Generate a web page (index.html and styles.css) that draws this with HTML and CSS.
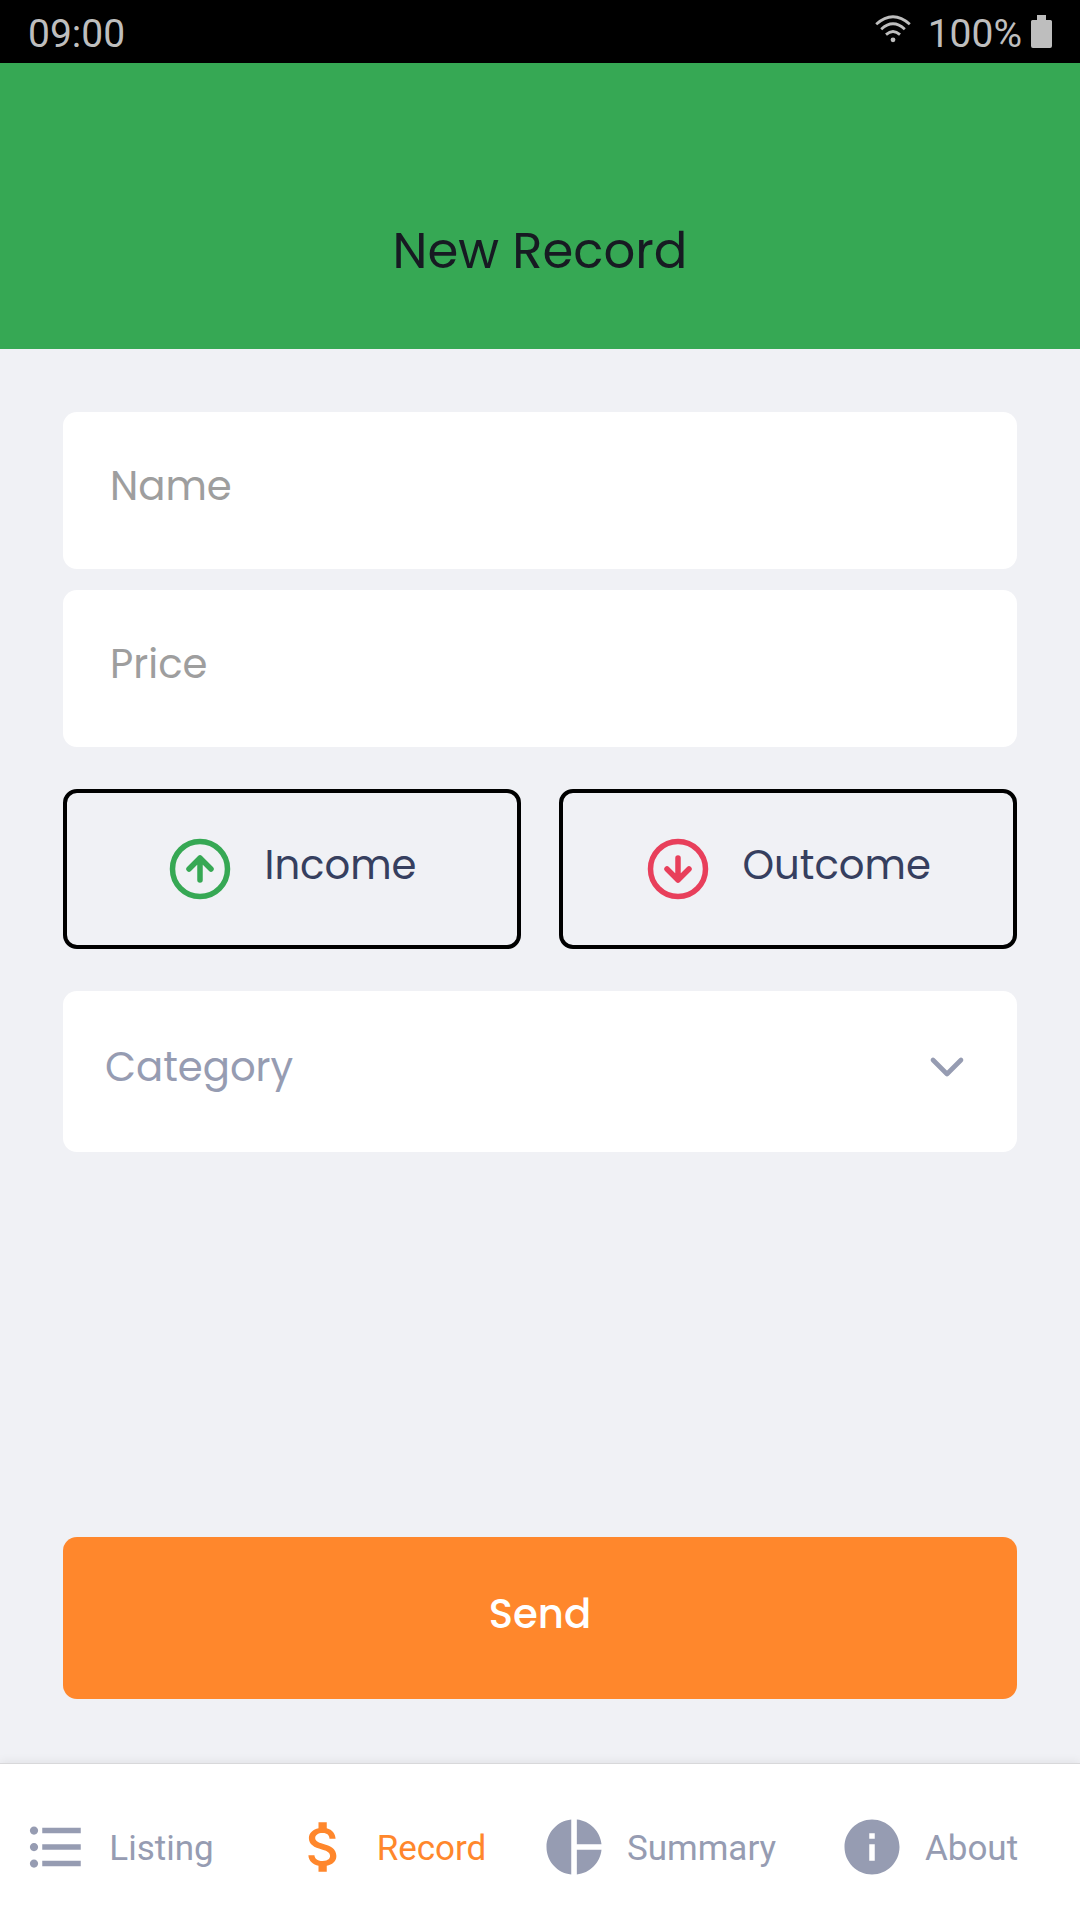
FILE: index.html
```html
<!DOCTYPE html>
<html lang="en">
<head>
<meta charset="utf-8">
<title>New Record</title>
<link rel="stylesheet" href="styles.css">
</head>
<body>
<div class="screen">
  <div class="status">
    <span class="status-time">09:00</span>
    <div class="status-right">
      <svg class="wifi" viewBox="0 0 36 28" fill="none" stroke="currentColor" stroke-width="2.8">
        <path d="M1.200 9.200Q18-5.800 34.800 9.200M6.200 14.200Q18 3.300 29.800 14.200M11 19.600Q18 13.400 25 19.600"/>
        <circle cx="18" cy="24.800" r="2.400" fill="currentColor" stroke="none"/>
      </svg>
      <span class="status-level">100%</span>
      <svg class="battery" viewBox="0 0 21 33" fill="currentColor"><path d="M6 0h9v5h4.500Q21 5 21 6.500V31Q21 33 19 33H2Q0 33 0 31V6.500Q0 5 1.500 5H6z"/></svg>
    </div>
  </div>
  <header class="header"><h1 class="title">New Record</h1></header>
  <main class="form">
    <div class="fields">
      <input class="field field-name" type="text" placeholder="Name">
      <input class="field field-price" type="text" placeholder="Price">
    </div>
    <div class="types">
      <button class="type" type="button">
        <svg class="type-icon up" viewBox="0 0 24 24"><circle cx="12" cy="12" r="10"/><path d="M16 12l-4-4-4 4M12 16V8"/></svg>
        <span class="type-label income">Income</span>
      </button>
      <button class="type" type="button">
        <svg class="type-icon down" viewBox="0 0 24 24"><circle cx="12" cy="12" r="10"/><path d="M8 12l4 4 4-4M12 8v8"/></svg>
        <span class="type-label outcome">Outcome</span>
      </button>
    </div>
    <button class="category" type="button">
      <span class="category-label">Category</span>
      <svg class="chevron" viewBox="0 0 24 24"><path d="M6 9l6 6 6-6"/></svg>
    </button>
    <button class="send" type="button"><span class="send-label">Send</span></button>
  </main>
  <nav class="tabs">
    <a class="tab">
      <svg class="tab-icon" viewBox="0 0 24 24"><path d="M4 10.500c-.83 0-1.500.67-1.500 1.500s.67 1.500 1.500 1.500 1.500-.67 1.500-1.500-.67-1.500-1.500-1.500zm0-6c-.83 0-1.500.67-1.500 1.500S3.170 7.500 4 7.500 5.500 6.830 5.500 6 4.830 4.500 4 4.500zm0 12c-.83 0-1.500.68-1.500 1.500s.68 1.500 1.500 1.500 1.500-.68 1.500-1.500-.67-1.500-1.500-1.500zM7 19h14v-2H7v2zm0-6h14v-2H7v2zm0-8v2h14V5H7z"/></svg>
      <span class="tab-label">Listing</span>
    </a>
    <a class="tab active">
      <svg class="tab-icon" viewBox="0 0 24 24"><path d="M11.800 10.900c-2.270-.59-3-1.200-3-2.150 0-1.090 1.010-1.850 2.700-1.850 1.780 0 2.440.85 2.500 2.100h2.210c-.07-1.720-1.120-3.300-3.210-3.810V3h-3v2.160c-1.940.42-3.500 1.680-3.500 3.610 0 2.310 1.910 3.460 4.700 4.130 2.500.6 3 1.480 3 2.410 0 .69-.49 1.790-2.700 1.790-2.060 0-2.870-.92-2.980-2.100h-2.200c.12 2.190 1.760 3.420 3.680 3.830V21h3v-2.150c1.950-.37 3.500-1.500 3.500-3.550 0-2.840-2.430-3.810-4.700-4.400z"/></svg>
      <span class="tab-label">Record</span>
    </a>
    <a class="tab">
      <svg class="tab-icon" viewBox="0 0 24 24"><path d="M11 2v20c-5.070-.5-9-4.790-9-10s3.930-9.500 9-10zm2.030 0v8.990H22c-.47-4.740-4.240-8.520-8.970-8.990zm0 11.010V22c4.740-.47 8.500-4.250 8.970-8.990h-8.970z"/></svg>
      <span class="tab-label">Summary</span>
    </a>
    <a class="tab">
      <svg class="tab-icon" viewBox="0 0 24 24"><path d="M12 2C6.480 2 2 6.480 2 12s4.480 10 10 10 10-4.480 10-10S17.520 2 12 2zm1 15h-2v-6h2v6zm0-8h-2V7h2v2z"/></svg>
      <span class="tab-label">About</span>
    </a>
  </nav>
</div>
</body>
</html>
```
FILE: styles.css
```css
* { box-sizing: border-box; }
body { margin: 0; }
button, input { font: inherit; border: 0; margin: 0; padding: 0; background: none; }

.screen {
  width: 1080px;
  height: 1920px;
  display: flex;
  flex-direction: column;
  overflow: hidden;
  background: #f0f1f5;
  font-family: Poppins, Inter, sans-serif;
  font-size: 40.2px;
}

.status {
  height: 63px;
  flex: none;
  display: flex;
  justify-content: space-between;
  padding: 0 28px;
  background: #000;
  color: #bebebe;
  font: 39px/46px Roboto, sans-serif;
}
.status-time { padding-top: 11px; }
.status-right { display: flex; align-items: flex-start; }
.wifi { width: 36px; height: 28px; margin: 15px 17px 0 0; }
.status-level { padding-top: 11px; margin-right: 9px; }
.battery { width: 21px; height: 33px; margin-top: 15px; }

.header {
  height: 286px;
  flex: none;
  display: flex;
  align-items: flex-end;
  justify-content: center;
  padding-bottom: 68px;
  background: #36a854;
}
.title { margin: 0; color: #171a22; font-size: 49.7px; font-weight: 400; line-height: 60px; }

.form { flex: 1; display: flex; flex-direction: column; padding: 63px 63px 64px; }
.fields { display: flex; flex-direction: column; gap: 21px; }
.field {
  width: 100%;
  height: 157px;
  padding: 0 47px 10px;
  border-radius: 14px;
  background: #fff;
}
.field::placeholder { color: #9e9e9e; opacity: 1; }

.types { display: grid; grid-template-columns: 1fr 1fr; gap: 38px; margin-top: 42px; }
.type {
  height: 160px;
  display: flex;
  align-items: center;
  padding-left: 100px;
  border: 4px solid #000;
  border-radius: 14px;
  color: #363f5f;
}
.type + .type { padding-left: 82px; }
.type-icon { width: 66px; height: 66px; fill: none; stroke-width: 2; stroke-linecap: round; stroke-linejoin: round; }
.up { stroke: #36a854; }
.down { stroke: #e83f5b; }
.type-label { margin-left: 31.5px; padding-bottom: 8px; }

.category {
  height: 161px;
  display: flex;
  align-items: center;
  justify-content: space-between;
  margin-top: 42px;
  padding: 0 42px 10px;
  border-radius: 14px;
  background: #fff;
  color: #969cb2;
}
.chevron { width: 56px; height: 56px; fill: none; stroke: #969cb2; stroke-width: 2; stroke-linecap: round; stroke-linejoin: round; }

.send {
  height: 162px;
  margin-top: auto;
  padding-bottom: 8px;
  border-radius: 14px;
  background: #ff872c;
  color: #fff;
  font-weight: 500;
}

.tabs {
  height: 157px;
  flex: none;
  display: grid;
  grid-template-columns: repeat(4, 270px);
  padding-top: 10px;
  border-top: 1px solid #d8d8da;
  background: #fff;
  box-shadow: 0 -1px 10px rgba(0, 0, 0, .07);
  color: #969cb2;
  font: 35px/42px Roboto, sans-serif;
}
.tab { display: flex; align-items: center; justify-content: center; padding-right: 33px; }
.tab-icon { width: 66px; height: 66px; fill: currentColor; }
.tab-label { margin-left: 20px; padding-top: 4px; }
.active { color: #ff872c; }
```
